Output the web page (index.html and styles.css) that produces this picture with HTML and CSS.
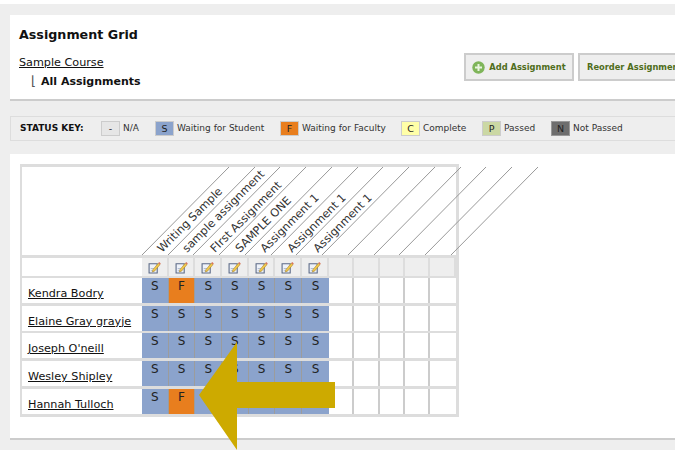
FILE: index.html
```html
<!doctype html>
<html lang="en">
<head>
<meta charset="utf-8">
<title>Assignment Grid</title>
<link rel="stylesheet" href="styles.css">
</head>

<body>
<div class="page">
  <div class="panel top">
    <div class="crumbs">
      <h2>Assignment Grid</h2>
      <div><a href="#">Sample Course</a></div>
      <div class="current"><span class="elbow">&lfloor;</span><b>All Assignments</b></div>
    </div>
    <div class="actions">
      <button class="add">
        <svg width="13" height="13" viewBox="0 0 13 13"><circle cx="6.5" cy="6.5" r="6.2" fill="#7fb55a"/><path d="M6.5 3v7M3 6.5h7" stroke="#eaf5e0" stroke-width="2"/></svg>
        Add Assignment
      </button>
      <button>Reorder Assignments</button>
    </div>
  </div>

  <div class="key">
    <b class="key-title">STATUS KEY:</b>
    <span class="k na">-</span><span class="kl w-na">N/A</span>
    <span class="k st-s">S</span><span class="kl w-s">Waiting for Student</span>
    <span class="k st-f">F</span><span class="kl w-f">Waiting for Faculty</span>
    <span class="k st-c">C</span><span class="kl w-c">Complete</span>
    <span class="k st-p">P</span><span class="kl w-p">Passed</span>
    <span class="k st-n">N</span><span class="kl">Not Passed</span>
  </div>

  <div class="panel main">
    <div class="grid">
      <svg class="heads" width="434" height="88" viewBox="0 0 434 88">
        <g stroke="#999" stroke-width="1">
          <path d="M120 88L207 0"/><path d="M146 88L233 0"/><path d="M171 88L258 0"/><path d="M197 88L284 0"/>
          <path d="M223 88L310 0"/><path d="M249 88L336 0"/><path d="M274 88L361 0"/><path d="M300 88L387 0"/>
          <path d="M326 88L413 0"/><path d="M352 88L439 0"/><path d="M377 88L464 0"/><path d="M403 88L490 0"/>
          <path d="M429 88L516 0"/>
        </g>
        <g class="head-text">
          <text transform="translate(140 86) rotate(-45)">Writing Sample</text>
          <text transform="translate(165 86) rotate(-45)">sample assignment</text>
          <text transform="translate(193 86) rotate(-45)">FIrst Assignment</text>
          <text transform="translate(218 86) rotate(-45)">SAMPLE ONE</text>
          <text transform="translate(243 86) rotate(-45)">Assignment 1</text>
          <text transform="translate(270 86) rotate(-45)">Assignment 1</text>
          <text transform="translate(296 86) rotate(-45)">Assignment 1</text>
        </g>
      </svg>

      <div class="row tools">
        <div class="name"></div>
        <div class="c"><svg class="ed" viewBox="0 0 12 12"><use href="#edit"/></svg></div>
        <div class="c"><svg class="ed" viewBox="0 0 12 12"><use href="#edit"/></svg></div>
        <div class="c"><svg class="ed" viewBox="0 0 12 12"><use href="#edit"/></svg></div>
        <div class="c"><svg class="ed" viewBox="0 0 12 12"><use href="#edit"/></svg></div>
        <div class="c"><svg class="ed" viewBox="0 0 12 12"><use href="#edit"/></svg></div>
        <div class="c"><svg class="ed" viewBox="0 0 12 12"><use href="#edit"/></svg></div>
        <div class="c"><svg class="ed" viewBox="0 0 12 12"><use href="#edit"/></svg></div>
        <div class="c"></div><div class="c"></div><div class="c"></div><div class="c"></div><div class="c"></div>
      </div>

      <div class="row">
        <div class="name"><a href="#">Kendra Bodry</a></div>
        <div class="c s">S</div><div class="c f">F</div><div class="c s">S</div><div class="c s">S</div><div class="c s">S</div><div class="c s">S</div><div class="c s last">S</div>
        <div class="c"></div><div class="c"></div><div class="c"></div><div class="c"></div><div class="c"></div>
      </div>
      <div class="row">
        <div class="name"><a href="#">Elaine Gray grayje</a></div>
        <div class="c s">S</div><div class="c s">S</div><div class="c s">S</div><div class="c s">S</div><div class="c s">S</div><div class="c s">S</div><div class="c s last">S</div>
        <div class="c"></div><div class="c"></div><div class="c"></div><div class="c"></div><div class="c"></div>
      </div>
      <div class="row">
        <div class="name"><a href="#">Joseph O'neill</a></div>
        <div class="c s">S</div><div class="c s">S</div><div class="c s">S</div><div class="c s">S</div><div class="c s">S</div><div class="c s">S</div><div class="c s last">S</div>
        <div class="c"></div><div class="c"></div><div class="c"></div><div class="c"></div><div class="c"></div>
      </div>
      <div class="row">
        <div class="name"><a href="#">Wesley Shipley</a></div>
        <div class="c s">S</div><div class="c s">S</div><div class="c s">S</div><div class="c s">S</div><div class="c s">S</div><div class="c s">S</div><div class="c s last">S</div>
        <div class="c"></div><div class="c"></div><div class="c"></div><div class="c"></div><div class="c"></div>
      </div>
      <div class="row">
        <div class="name"><a href="#">Hannah Tulloch</a></div>
        <div class="c s">S</div><div class="c f">F</div><div class="c s">S</div><div class="c s">S</div><div class="c s">S</div><div class="c s">S</div><div class="c s last">S</div>
        <div class="c"></div><div class="c"></div><div class="c"></div><div class="c"></div><div class="c"></div>
      </div>
    </div>
  </div>
</div>

<svg class="defs" width="0" height="0">
  <symbol id="edit" viewBox="0 0 12 12">
    <path d="M1 2.5h7.5v8.5H1z" fill="#eef2f9" stroke="#5c6a86" stroke-width="1"/>
    <path d="M2.5 7h3M2.5 9h4" stroke="#9aa8c2" stroke-width=".7"/>
    <path d="M4.5 8l5-6 1.6 1.3-5 6-2 .8z" fill="#f1c84b" stroke="#a8801c" stroke-width=".5"/>
    <path d="M9.5 2l.8-1 1.5 1.3-.7 1z" fill="#d9705a"/>
  </symbol>
</svg>

<svg class="arrow" width="140" height="110" viewBox="0 0 140 110">
  <path d="M4 53L42 0V40H140V66H42V108z" fill="#cdaa00"/>
</svg>
</body>
</html>
```

FILE: styles.css
```css
html, body {
  margin: 0;
  height: 450px;
  overflow: hidden;
  background: white;
  font-family: "DejaVu Sans", sans-serif;
  color: #111;
}

a {
  color: #111;
}

.page {
  margin-top: 4px;
  height: 446px;
  padding: 11px 0 0 10px;
  box-sizing: border-box;
  background: #eee;
}

.panel {
  background: white;
  border-bottom: 2px solid #ccc;
}

.top {
  display: flex;
  height: 84px;
}

.crumbs {
  padding: 12px 0 0 9px;
  width: 445px;
  font-size: 11.2px;
  flex: none;
}
.crumbs h2 {
  margin: 0 0 11px;
  font-size: 12.7px;
  line-height: 16px;
}
.crumbs div {
  line-height: 18px;
  height: 18px;
}
.current {
  padding-left: 12px;
  font-size: 11px;
}
.elbow {
  display: inline-block;
  width: 10px;
  font-size: 13px;
  color: #555;
}

.actions {
  display: flex;
  gap: 4px;
  padding-top: 38px;
  flex: none;
}
.actions button {
  height: 28px;
  padding: 0 7px;
  background: #eee;
  border: 2px solid #ccc;
  color: #4f6d1b;
  font: bold 8.3px "DejaVu Sans", sans-serif;
  white-space: nowrap;
}
.actions svg {
  vertical-align: -4px;
  margin-right: 1px;
}
.actions .add {
  width: 110px;
  padding: 0 6px;
}

.key {
  display: flex;
  align-items: center;
  margin: 15px 0 13px;
  height: 25px;
  padding-left: 9px;
  box-sizing: border-box;
  background: #eee;
  border: 1px solid #ddd;
  border-right: 0;
  font-size: 9px;
  color: #333;
}
.key-title {
  width: 81px;
  flex: none;
  margin-bottom: 2px;
  color: #111;
  font-size: 9px;
}
.k {
  width: 19px;
  height: 15px;
  margin-right: 3px;
  flex: none;
  box-sizing: border-box;
  border: 1px solid #ccc;
  text-align: center;
  line-height: 14px;
  font-size: 9.5px;
  color: #222;
}
.kl {
  flex: none;
  margin-bottom: 2px;
}
.na { background: #e6e6e6; }
.st-s { background: #8ba3cc; }
.st-f { background: #e87e1e; }
.st-c { background: #ffffa8; }
.st-p { background: #cbd8a4; }
.st-n { background: #6e6e6e; border-color: #999; }

.w-na { width: 32px; }
.w-s { width: 103px; }
.w-f { width: 99px; }
.w-c { width: 59px; }
.w-p { width: 47px; }

.main {
  height: 286px;
  padding: 10px 0 0 10px;
  box-sizing: border-box;
}

.grid {
  width: 439px;
  padding: 3px 3px 3px 2px;
  box-sizing: border-box;
  background: #ddd;
  display: flex;
  flex-direction: column;
  gap: 2.6px;
}

.heads {
  display: block;
  background: white;
  overflow: visible;
}
.head-text {
  font-size: 11.3px;
  fill: #333;
}

.row {
  display: grid;
  grid-template-columns: 120px repeat(7, 26.7px) repeat(5, 25.4px);
  height: 25px;
  background: white;
}
.tools {
  height: 18px;
  background: #eee;
}
.tools .name {
  background: white;
}

.name {
  font-size: 11.2px;
  padding: 8px 0 0 6px;
  line-height: 15px;
  white-space: nowrap;
}
.c {
  border-right: 2px solid #ccc;
  text-align: center;
  font-size: 12px;
  line-height: 16px;
  color: #222;
}
.c:last-child {
  border-right: 0;
}
.s {
  background: #8ba3cc;
  border-right: 1px solid #9c9c9c;
}
.f {
  background: #e87e1e;
  border-right: 1px solid #9c9c9c;
}
.last {
  border-right: 0;
}
.tools .c {
  border-right: 2px solid #ddd;
  line-height: 0;
}
.ed {
  width: 13px;
  height: 13px;
  margin-top: 3px;
}

.defs {
  position: absolute;
}
.arrow {
  position: absolute;
  left: 195px;
  top: 342px;
}
```
